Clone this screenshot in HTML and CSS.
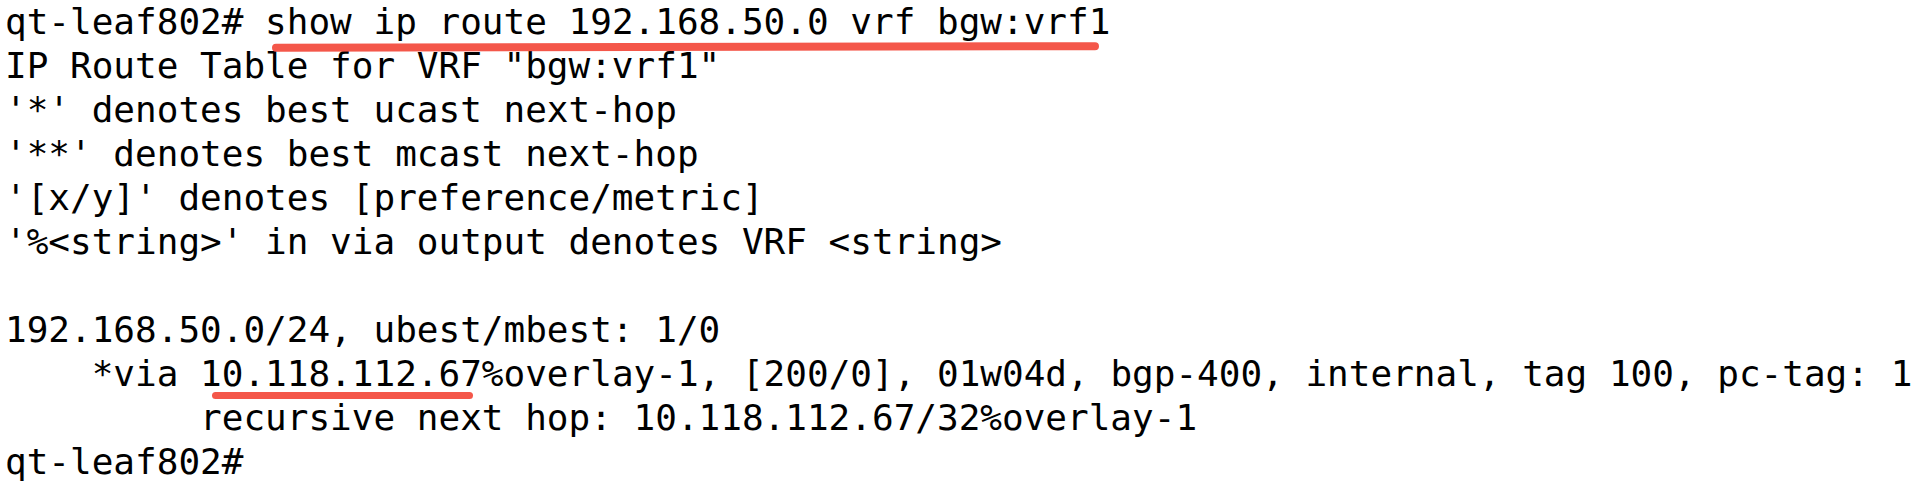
FILE: index.html
```html
<!DOCTYPE html>
<html>
<head>
<meta charset="utf-8">
<link rel="stylesheet" href="styles.css">
</head>
<body>
<div class="term">
<div class="line">qt-leaf802# <span class="mark mark-cmd">show ip route 192.168.50.0 vrf bgw:vrf1</span></div>
<div class="line">IP Route Table for VRF "bgw:vrf1"</div>
<div class="line">'*' denotes best ucast next-hop</div>
<div class="line">'**' denotes best mcast next-hop</div>
<div class="line">'[x/y]' denotes [preference/metric]</div>
<div class="line">'%&lt;string&gt;' in via output denotes VRF &lt;string&gt;</div>
<div class="line"> </div>
<div class="line">192.168.50.0/24, ubest/mbest: 1/0</div>
<div class="line">    *via <span class="mark mark-hop">10.118.112.67</span>%overlay-1, [200/0], 01w04d, bgp-400, internal, tag 100, pc-tag: 1</div>
<div class="line">         recursive next hop: 10.118.112.67/32%overlay-1</div>
<div class="line">qt-leaf802#</div>
</div>
</body>
</html>
```
FILE: styles.css
```css
html, body {
  margin: 0;
  padding: 0;
  background: #ffffff;
}

.term {
  padding: 0 0 0 5px;
  font-family: "DejaVu Sans Mono", "Liberation Mono", monospace;
  font-size: 36px;
  line-height: 44px;
  color: #000000;
}

.line {
  white-space: pre;
  height: 44px;
}

.mark {
  position: relative;
  display: inline-block;
}

.mark::after {
  content: "";
  position: absolute;
  background: #f4574a;
}

.mark-cmd::after {
  left: 7px;
  right: 11px;
  top: 43px;
  height: 8px;
  border-radius: 4px;
  transform: rotate(-0.12deg);
}

.mark-hop::after {
  left: 12px;
  right: 9px;
  top: 40px;
  height: 7px;
  border-radius: 4px;
}
```
